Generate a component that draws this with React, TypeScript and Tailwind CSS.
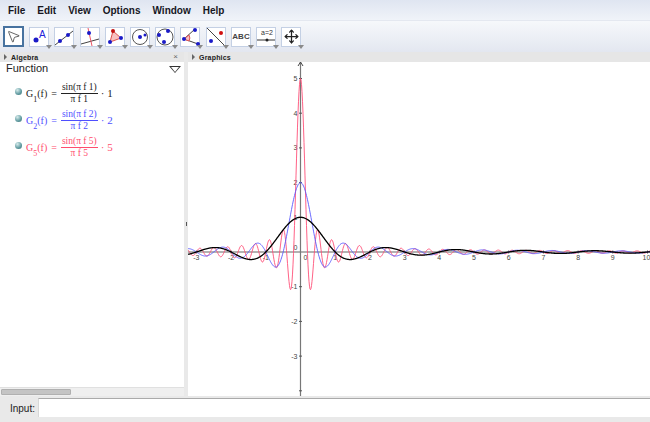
import type { ReactNode } from 'react'
import { MousePointer2, Move } from 'lucide-react'

const UNIT = 34.7
const ORIGIN_X = 112.5
const ORIGIN_Y = 190
const BLUE_DOT = '#1a1ac8'

const MENU_ITEMS = ['File', 'Edit', 'View', 'Options', 'Window', 'Help']

// G_n(f) = sin(pi f n) / (pi f n) * n
function curvePath(n: number) {
  const points: string[] = []
  for (let px = 0; px <= 462; px += 0.5) {
    const f = (px - ORIGIN_X) / UNIT
    const t = Math.PI * f * n
    const value = Math.abs(t) < 1e-6 ? n : (Math.sin(t) / t) * n
    points.push(`${px},${(ORIGIN_Y - value * UNIT).toFixed(2)}`)
  }
  return 'M' + points.join('L')
}

function Dot({ x, y, color = BLUE_DOT, r = 2 }: { x: number; y: number; color?: string; r?: number }) {
  return <circle cx={x} cy={y} r={r} fill={color} />
}

const TOOL_ICONS: ReactNode[] = [
  <>
    <Dot x={7} y={13} r={2.5} />
    <text x={10} y={11} fontSize={10} fill="#2020d8" fontFamily="Liberation Sans, sans-serif">A</text>
  </>,
  <>
    <line x1={1} y1={18} x2={19} y2={4} stroke="#444" />
    <Dot x={6} y={14} />
    <Dot x={14} y={8} />
  </>,
  <>
    <line x1={1} y1={17} x2={19} y2={12} stroke="#444" />
    <line x1={8} y1={1} x2={12} y2={19} stroke="#ee5566" />
    <Dot x={9} y={6} />
  </>,
  <>
    <polygon points="5,15 8,4 16,11" fill="#f8c0c0" stroke="#e05050" />
    <Dot x={5} y={15} />
    <Dot x={8} y={4} color="#c01010" />
    <Dot x={16} y={11} />
  </>,
  <>
    <circle cx={10} cy={10} r={7.5} fill="none" stroke="#555" />
    <Dot x={10} y={10} />
    <Dot x={15} y={8} r={1.5} />
  </>,
  <>
    <circle cx={10} cy={10} r={8} fill="none" stroke="#555" />
    <Dot x={4} y={8} />
    <Dot x={13} y={4} />
    <Dot x={9} y={15} />
  </>,
  <>
    <polyline points="18,17 4,12 15,2" fill="none" stroke="#444" />
    <path d="M9 14 A6 6 0 0 0 9 8 L4 12 Z" fill="#f8c0c0" stroke="#e05050" />
    <Dot x={4} y={12} />
    <Dot x={15} y={3} />
    <Dot x={18} y={17} />
  </>,
  <>
    <line x1={1} y1={1} x2={19} y2={19} stroke="#444" />
    <Dot x={15} y={6} color="#d01010" />
    <Dot x={5} y={14} />
  </>,
  <text x={10} y={12} fontSize={8} textAnchor="middle" fill="#444" fontWeight="bold" fontFamily="Liberation Sans, sans-serif">ABC</text>,
  <>
    <text x={11} y={8} fontSize={7} textAnchor="middle" fill="#333" fontFamily="Liberation Sans, sans-serif">a=2</text>
    <line x1={1} y1={13} x2={19} y2={13} stroke="#333" />
    <Dot x={11} y={13} r={1.5} color="#222" />
  </>,
]

function Caret() {
  return (
    <div className="absolute right-[-4px] bottom-[-3px] w-0 h-0 border-x-[3px] border-x-transparent border-t-[4px] border-t-[#8a8a8a]" />
  )
}

function ToolButton({ children }: { children: ReactNode }) {
  return (
    <div className="relative w-5 h-5 bg-white border border-[#c4d0e4] shrink-0">
      <svg width={20} height={20} viewBox="0 0 20 20" className="-m-px block">
        {children}
      </svg>
      <Caret />
    </div>
  )
}

function PanelHeader({ title, children }: { title: string; children?: ReactNode }) {
  return (
    <div className="h-2.5 flex items-center bg-[#e6e6e6] pl-1 pr-1.5">
      <div className="w-0 h-0 border-y-[3px] border-y-transparent border-l-[3px] border-l-[#666] mr-1" />
      <span className="text-[7px] font-bold leading-none text-[#222] tracking-[0.2px]">{title}</span>
      {children}
    </div>
  )
}

function Fn({ index, num, denom, mult, color }: { index: number; num: string; denom: string; mult: number; color: string }) {
  return (
    <div className={`flex items-center h-[27px] pl-[15px] ${color}`} style={{ fontFamily: '"Liberation Serif", serif' }}>
      <div className="w-[7px] h-[7px] rounded-full bg-[radial-gradient(circle_at_35%_30%,#d8ecec,#5f9aa0_60%,#3d6f70)] mr-1 -mt-1" />
      <span className="text-[10px] leading-none whitespace-nowrap">
        G<sub className="text-[8px] align-[-3px]">{index}</sub>(f)
      </span>
      <span className="text-[10px] ml-[4px] mr-[4px]">=</span>
      <div className="flex flex-col items-center text-[9.5px] leading-[11px] whitespace-nowrap">
        <span className="border-b border-current px-px">sin(π f {num})</span>
        <span>π f {denom}</span>
      </div>
      <span className="text-[11px] ml-[3px]">· {mult}</span>
    </div>
  )
}

function Graph() {
  const xTicks = [-3, -2, -1, 1, 2, 3, 4, 5, 6, 7, 8, 9, 10]
  const yTicks = [5, 4, 3, 2, 1, -1, -2, -3]
  return (
    <svg width={462} height={334} className="block bg-white">
      <line x1={0} y1={ORIGIN_Y} x2={462} y2={ORIGIN_Y} stroke="#999" strokeWidth={1.5} />
      <line x1={ORIGIN_X} y1={0} x2={ORIGIN_X} y2={334} stroke="#777" strokeWidth={1.2} />
      <path d={`M${ORIGIN_X - 2.5} 4 L${ORIGIN_X} 0 L${ORIGIN_X + 2.5} 4`} fill="none" stroke="#444" />
      {xTicks.map((t) => (
        <g key={t}>
          <line x1={ORIGIN_X + t * UNIT} y1={ORIGIN_Y - 1.5} x2={ORIGIN_X + t * UNIT} y2={ORIGIN_Y + 1.5} stroke="#555" />
          <text x={ORIGIN_X + t * UNIT - (t === 10 ? 1 : 0)} y={ORIGIN_Y + 8} fontSize={7} textAnchor="middle" fill="#444">{t}</text>
        </g>
      ))}
      {yTicks.map((t) => (
        <g key={t}>
          <line x1={ORIGIN_X - 1.5} y1={ORIGIN_Y - t * UNIT} x2={ORIGIN_X + 1.5} y2={ORIGIN_Y - t * UNIT} stroke="#555" />
          <text x={ORIGIN_X - 3} y={ORIGIN_Y - t * UNIT + 2.5} fontSize={7} textAnchor="end" fill="#444">{t}</text>
        </g>
      ))}
      <line x1={ORIGIN_X - 1.5} y1={ORIGIN_Y + 4 * UNIT} x2={ORIGIN_X + 1.5} y2={ORIGIN_Y + 4 * UNIT} stroke="#555" />
      <text x={ORIGIN_X - 3} y={ORIGIN_Y - 2} fontSize={7} textAnchor="end" fill="#444">0</text>
      <text x={ORIGIN_X + 3} y={ORIGIN_Y + 8} fontSize={7} fill="#444">0</text>
      <path d={curvePath(5)} fill="none" stroke="#ff5078" strokeWidth={0.9} />
      <path d={curvePath(2)} fill="none" stroke="#5a5aff" strokeWidth={0.9} />
      <path d={curvePath(1)} fill="none" stroke="#000" strokeWidth={1.3} />
    </svg>
  )
}

export default function App() {
  return (
    <div className="w-[650px] h-[422px] flex flex-col overflow-hidden bg-white text-black" style={{ fontFamily: '"Liberation Sans", Arial, sans-serif' }}>
      {/* Menu bar */}
      <div className="h-5 flex items-center gap-3 pl-2 bg-[linear-gradient(#dfe5f1,#f0f3f9)]">
        {MENU_ITEMS.map((item) => (
          <span key={item} className="text-[10px] font-bold text-[#16161e]">{item}</span>
        ))}
      </div>

      {/* Toolbar */}
      <div className="h-8 flex items-center gap-[5.2px] pl-[3px] bg-[linear-gradient(#f6f8fb,#e3e7f0)] border-t border-[#e4e8f0]">
        <div className="w-[21px] h-[21px] bg-white border-2 border-[#47729f] flex items-center justify-center shrink-0">
          <MousePointer2 size={15} strokeWidth={1.2} className="text-[#333]" />
        </div>
        {TOOL_ICONS.map((icon, i) => (
          <ToolButton key={i}>{icon}</ToolButton>
        ))}
        <div className="relative w-5 h-5 bg-white border border-[#c4d0e4] flex items-center justify-center shrink-0">
          <Move size={15} strokeWidth={2} className="text-[#222]" />
          <Caret />
        </div>
      </div>

      {/* Panels */}
      <div className="flex-1 flex min-h-0 bg-[#e9e9e9]">
        <div className="w-[184px] flex flex-col bg-white">
          <PanelHeader title="Algebra">
            <span className="ml-auto text-[8px] leading-none text-[#666]">×</span>
          </PanelHeader>
          <div className="flex-1 min-h-0">
            <div className="relative h-[14px] pl-[6px] text-[11px] leading-[12px] text-[#222]">
              Function
              <div className="absolute right-[3px] top-[4px] w-0 h-0 border-x-[6px] border-x-transparent border-t-[7px] border-t-[#333]" />
              <div className="absolute right-[5px] top-[5px] w-0 h-0 border-x-[4px] border-x-transparent border-t-[5px] border-t-white" />
            </div>
            <div className="pt-1">
              <Fn index={1} num="1" denom="1" mult={1} color="text-[#222]" />
              <Fn index={2} num="2" denom="2" mult={2} color="text-[#4f4fff]" />
              <Fn index={5} num="5" denom="5" mult={5} color="text-[#ff4d6d]" />
            </div>
          </div>
          <div className="h-[9px] bg-[#efefef] border-t border-[#e0e0e0] pl-px pt-px">
            <div className="w-[70px] h-[6px] bg-[#c4c4c4] border border-[#b0b0b0] rounded-[1px]" />
          </div>
        </div>

        <div className="w-1 flex items-center justify-center">
          <div className="w-px h-1 bg-[#555]" />
        </div>

        <div className="flex-1 flex flex-col min-w-0">
          <PanelHeader title="Graphics" />
          <Graph />
        </div>
      </div>

      {/* Input bar */}
      <div className="h-[26px] flex items-start gap-[3px] pt-[2px] bg-[#e9e9e9]">
        <span className="w-[35px] text-right text-[10px] leading-[19px] mt-[1px] text-[#222]">Input:</span>
        <div className="flex-1 h-[19px] bg-white border-t border-l border-t-[#aaa] border-l-[#d8d8d8]" />
      </div>
    </div>
  )
}
